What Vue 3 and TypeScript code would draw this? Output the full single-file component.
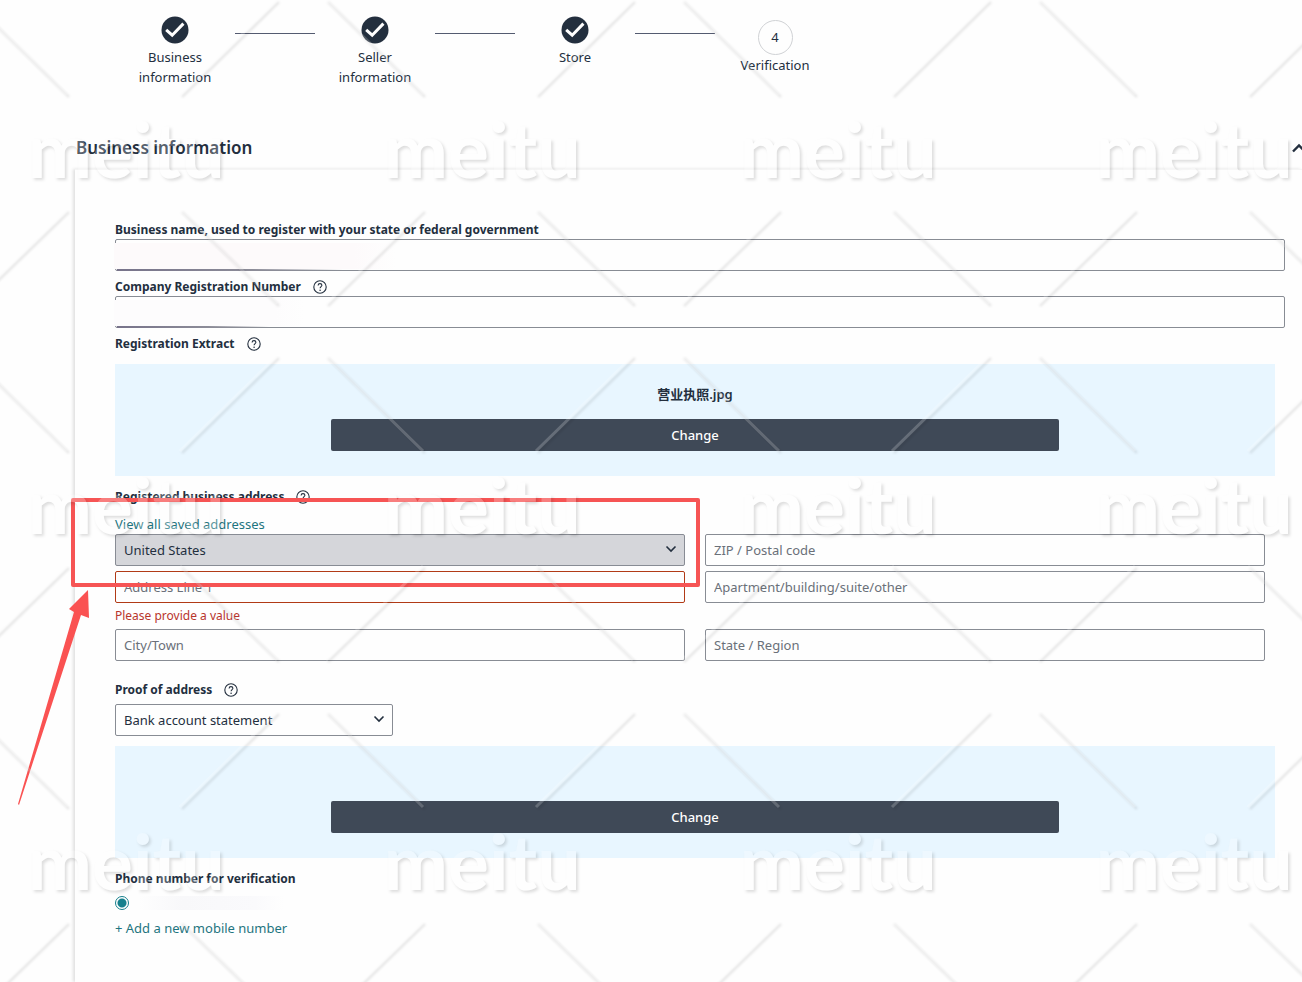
<script setup lang="ts">
import { ref } from 'vue'

interface Step { label: string; done: boolean }
const steps: Step[] = [
  { label: 'Business information', done: true },
  { label: 'Seller information', done: true },
  { label: 'Store', done: true },
  { label: 'Verification', done: false },
]
const businessName = ref('')
const registrationNumber = ref('')
const country = ref('United States')
const proof = ref('Bank account statement')
const phone = ref('current')
const address = ref({ zip: '', line1: '', line2: '', city: '', state: '' })
</script>

<template>
  <div class="page">
    <svg class="defs" aria-hidden="true">
      <symbol id="help" viewBox="0 0 14 14">
        <circle cx="7" cy="7" r="6.2" fill="none" stroke="currentColor" stroke-width="1.1" />
        <path d="M5.1 5.5C5.1 4.3 5.900 3.600 7 3.600s1.900.7 1.900 1.700c0 1.300-1.800 1.400-1.800 3" fill="none" stroke="currentColor" stroke-width="1.1" />
        <circle cx="7.1" cy="10.2" r=".8" fill="currentColor" />
      </symbol>
      <symbol id="chevron" viewBox="0 0 12 8">
        <path d="M1.500 1.500 6 6l4.500-4.500" fill="none" stroke="currentColor" stroke-width="1.6" />
      </symbol>
    </svg>

    <ol class="steps">
      <li v-for="(step, i) in steps" :key="step.label" class="step">
        <svg v-if="step.done" class="tick" viewBox="0 0 28 28" aria-hidden="true">
          <circle cx="14" cy="14" r="13.500" fill="#232f3e" />
          <path d="M5.200 13.800 11.200 19.200 22.400 7.600" fill="none" stroke="#fff" stroke-width="3" />
        </svg>
        <span v-else class="number">{{ i + 1 }}</span>
        <span class="step-label">{{ step.label }}</span>
      </li>
    </ol>

    <section class="section">
      <header class="section-head">
        <h2>Business information</h2>
        <button class="toggle" type="button" aria-label="Collapse">
          <svg viewBox="0 0 16 12"><path d="M2 9.500 8 3.500l6 6" fill="none" stroke="currentColor" stroke-width="2.400" /></svg>
        </button>
      </header>

      <form class="card" @submit.prevent>
        <div class="field">
          <label for="name">Business name, used to register with your state or federal government</label>
          <div class="masked">
            <input id="name" v-model="businessName" class="box" type="text" />
            <span class="smudge wide"></span>
          </div>
        </div>
        <div class="field">
          <div class="label-row">
            <label for="number">Company Registration Number</label>
            <svg class="help"><use href="#help" /></svg>
          </div>
          <div class="masked">
            <input id="number" v-model="registrationNumber" class="box" type="text" />
            <span class="smudge"></span>
          </div>
        </div>
        <div class="label-row">
          <span class="label">Registration Extract</span>
          <svg class="help"><use href="#help" /></svg>
        </div>
        <div class="upload">
          <span class="file">营业执照.jpg</span>
          <button class="change" type="button">Change</button>
        </div>

        <div class="address">
          <div class="label-row">
            <span class="label">Registered business address</span>
            <svg class="help"><use href="#help" /></svg>
          </div>
          <a class="link saved" href="#">View all saved addresses</a>
          <div class="grid">
            <div class="select">
              <select v-model="country" class="box filled" aria-label="Country"><option>United States</option></select>
              <svg class="chevron"><use href="#chevron" /></svg>
            </div>
            <input v-model="address.zip" class="box" type="text" placeholder="ZIP / Postal code" aria-label="ZIP / Postal code" />
            <div class="line">
              <input v-model="address.line1" class="box invalid" type="text" placeholder="Address Line 1" aria-label="Address Line 1" />
              <span class="error">Please provide a value</span>
            </div>
            <input v-model="address.line2" class="box" type="text" placeholder="Apartment/building/suite/other" aria-label="Apartment/building/suite/other" />
            <input v-model="address.city" class="box" type="text" placeholder="City/Town" aria-label="City/Town" />
            <input v-model="address.state" class="box" type="text" placeholder="State / Region" aria-label="State / Region" />
          </div>
          <div class="frame"></div>
          <svg class="frame-arrow" viewBox="0 0 74 218" aria-hidden="true">
            <path d="M71 2 72 30 64 27 2 217 1 216 57 24 52 21Z" fill="#fa5252" />
          </svg>
        </div>

        <div class="proof">
          <div class="label-row">
            <label for="proof">Proof of address</label>
            <svg class="help"><use href="#help" /></svg>
          </div>
          <div class="select">
            <select id="proof" v-model="proof" class="box"><option>Bank account statement</option></select>
            <svg class="chevron"><use href="#chevron" /></svg>
          </div>
        </div>
        <div class="upload second">
          <button class="change" type="button">Change</button>
        </div>

        <div class="label-row phone-label"><span class="label">Phone number for verification</span></div>
        <div class="phone">
          <input v-model="phone" class="radio" type="radio" name="phone" value="current" aria-label="Current phone number" />
          <span class="phone-mask"></span>
        </div>
        <a class="link add" href="#">+ Add a new mobile number</a>
      </form>
    </section>

    <svg class="watermark" aria-hidden="true">
      <defs>
        <filter id="soft" x="0" y="0" width="356" height="356" filterUnits="userSpaceOnUse"><feGaussianBlur stdDeviation="1" /></filter>
        <filter id="emboss" x="0" y="0" width="356" height="356" filterUnits="userSpaceOnUse" color-interpolation-filters="sRGB">
          <feGaussianBlur in="SourceAlpha" stdDeviation="1.4" />
          <feOffset dx="2" dy="2" />
          <feComposite in2="SourceAlpha" operator="out" />
          <feColorMatrix type="matrix" values="0 0 0 0 0  0 0 0 0 0  0 0 0 0 0  0 0 0 .13 0" result="shadow" />
          <feComponentTransfer in="SourceGraphic" result="body"><feFuncA type="linear" slope=".25" /></feComponentTransfer>
          <feMerge><feMergeNode in="shadow" /><feMergeNode in="body" /></feMerge>
        </filter>
        <pattern id="tile" x="-53" y="0" width="356" height="356" patternUnits="userSpaceOnUse">
          <path d="M25 2 122 97M332 2 235 97M235 212 332 306M122 212 25 306" fill="none" stroke="#000" stroke-opacity=".09" stroke-width="2.500" filter="url(#soft)" />
          <path d="M23 0 120 95M330 0 233 95M233 210 330 304M120 210 23 304" fill="none" stroke="#fff" stroke-opacity=".2" stroke-width="3" />
          <text class="mark" x="179" y="178" filter="url(#emboss)">meitu</text>
        </pattern>
      </defs>
      <rect width="100%" height="100%" fill="url(#tile)" />
    </svg>
  </div>
</template>

<style>
body { margin: 0; background: #fefefe; }
</style>

<style scoped>
* { box-sizing: border-box; }
.page { position: relative; min-height: 100vh; overflow: hidden; display: flex; flex-direction: column; font: 13px/20px "Noto Sans", "Noto Sans CJK SC", sans-serif; color: #232f3e; }
.defs { position: absolute; width: 0; height: 0; }
.steps { display: flex; gap: 80px; margin: 0; padding: 16px 0 0 115px; list-style: none; height: 137px; }
.step { position: relative; width: 120px; display: flex; flex-direction: column; align-items: center; text-align: center; }
.step:not(:last-child)::after { content: ""; position: absolute; left: 120px; top: 17px; width: 80px; height: 1px; background: #545b70; }
.tick { width: 28px; height: 28px; margin-bottom: 3px; flex: none; }
.step-label { width: 80px; }
.number { width: 35px; height: 35px; margin: 4px 0 0; border: 1px solid #d0d2d5; border-radius: 50%; line-height: 33px; }
.section { display: flex; flex-direction: column; flex: 1; }
.section-head { display: flex; align-items: center; height: 32px; padding: 0 0 10px 76px; justify-content: space-between; overflow: hidden; }
h2 { margin: 0; font-size: 17px; line-height: 24px; font-weight: 600; }
.toggle { border: 0; padding: 0; margin-right: -5px; background: none; color: #232f3e; }
.toggle svg { display: block; width: 16px; height: 12px; }
.card { flex: 1; margin-left: 75px; padding: 50px 17px 40px 40px; border-top: 1px solid #f5f5f5; box-shadow: -2px 0 3px rgba(0,0,0,.12); display: flex; flex-direction: column; align-items: stretch; }
label, .label { font-size: 12px; line-height: 20px; font-weight: 700; }
.field { display: flex; flex-direction: column; margin-bottom: 6px; }
.field label { height: 19px; }
.label-row { display: flex; align-items: center; gap: 12px; height: 20px; }
.field .label-row { height: 19px; }
.help { width: 14px; height: 14px; }
.masked { position: relative; }
.smudge { position: absolute; left: -1px; top: 4px; width: 190px; height: 26px; background: linear-gradient(90deg, #fdfcfd 85%, transparent); }
.smudge::after { content: ""; position: absolute; left: 3px; top: 26px; width: 80%; height: 2px; background: linear-gradient(90deg, #77738a, #8c8c98 60%, transparent); }
.smudge.wide { width: 282px; background: linear-gradient(90deg, #fdfafb 85%, transparent); }
.box { width: 100%; height: 32px; margin: 0; padding: 0 8px; border: 1px solid #888c94; border-radius: 2px; background: transparent; color: #232f3e; font: inherit; appearance: none; outline: none; display: block; }
.box::placeholder { color: #6a7079; opacity: 1; }
.filled { background: #d5d6da; }
.invalid { border-color: #b13a16; }
.upload { margin: 10px 10px 0 0; height: 112px; padding-top: 20px; background: #e8f6ff; display: flex; flex-direction: column; align-items: center; }
.file { height: 35px; line-height: 20px; font-weight: 600; }
.change { width: 62.7%; height: 32px; border: 0; border-radius: 2px; background: #3f4957; color: #fff; font: inherit; font-weight: 500; }
.second { padding-top: 55px; }
.address { position: relative; margin: 11px 20px 0 0; display: flex; flex-direction: column; }
.link { color: #1f7580; text-decoration: none; align-self: flex-start; }
.saved { margin-top: 7px; }
.grid { display: grid; grid-template-columns: 57fr 56fr; column-gap: 20px; row-gap: 5px; }
.select { position: relative; }
.chevron { position: absolute; right: 8px; top: 11px; width: 12px; height: 8px; pointer-events: none; }
.error { display: block; height: 21px; color: #b8352c; font-size: 12px; line-height: 26px; }
.frame { position: absolute; left: -44px; top: 11px; width: calc(50% + 54px); height: 89px; border: 4px solid #f65454; border-radius: 2px; pointer-events: none; }
.frame-arrow { position: absolute; left: -98px; top: 101px; width: 74px; height: 218px; }
.proof { margin-top: 19px; width: 278px; }
.proof .label-row { margin-bottom: 4px; }
.phone-label { margin-top: 11px; }
.phone { display: flex; gap: 10px; margin-top: 7px; height: 14px; }
.phone-mask { width: 145px; background: linear-gradient(90deg, transparent, #f8f8fa 30%, #fafafc 80%, transparent); }
.radio { appearance: none; width: 14px; height: 14px; margin: 0; border: 1px solid #16808d; border-radius: 50%; background: radial-gradient(circle, #16808d 4px, transparent 5px); }
.add { margin-top: 8px; }
.watermark { position: absolute; left: 0; top: 0; width: 100%; height: 100%; pointer-events: none; }
.mark { font: 700 77px Lato, sans-serif; text-anchor: middle; fill: #fff; }
</style>
